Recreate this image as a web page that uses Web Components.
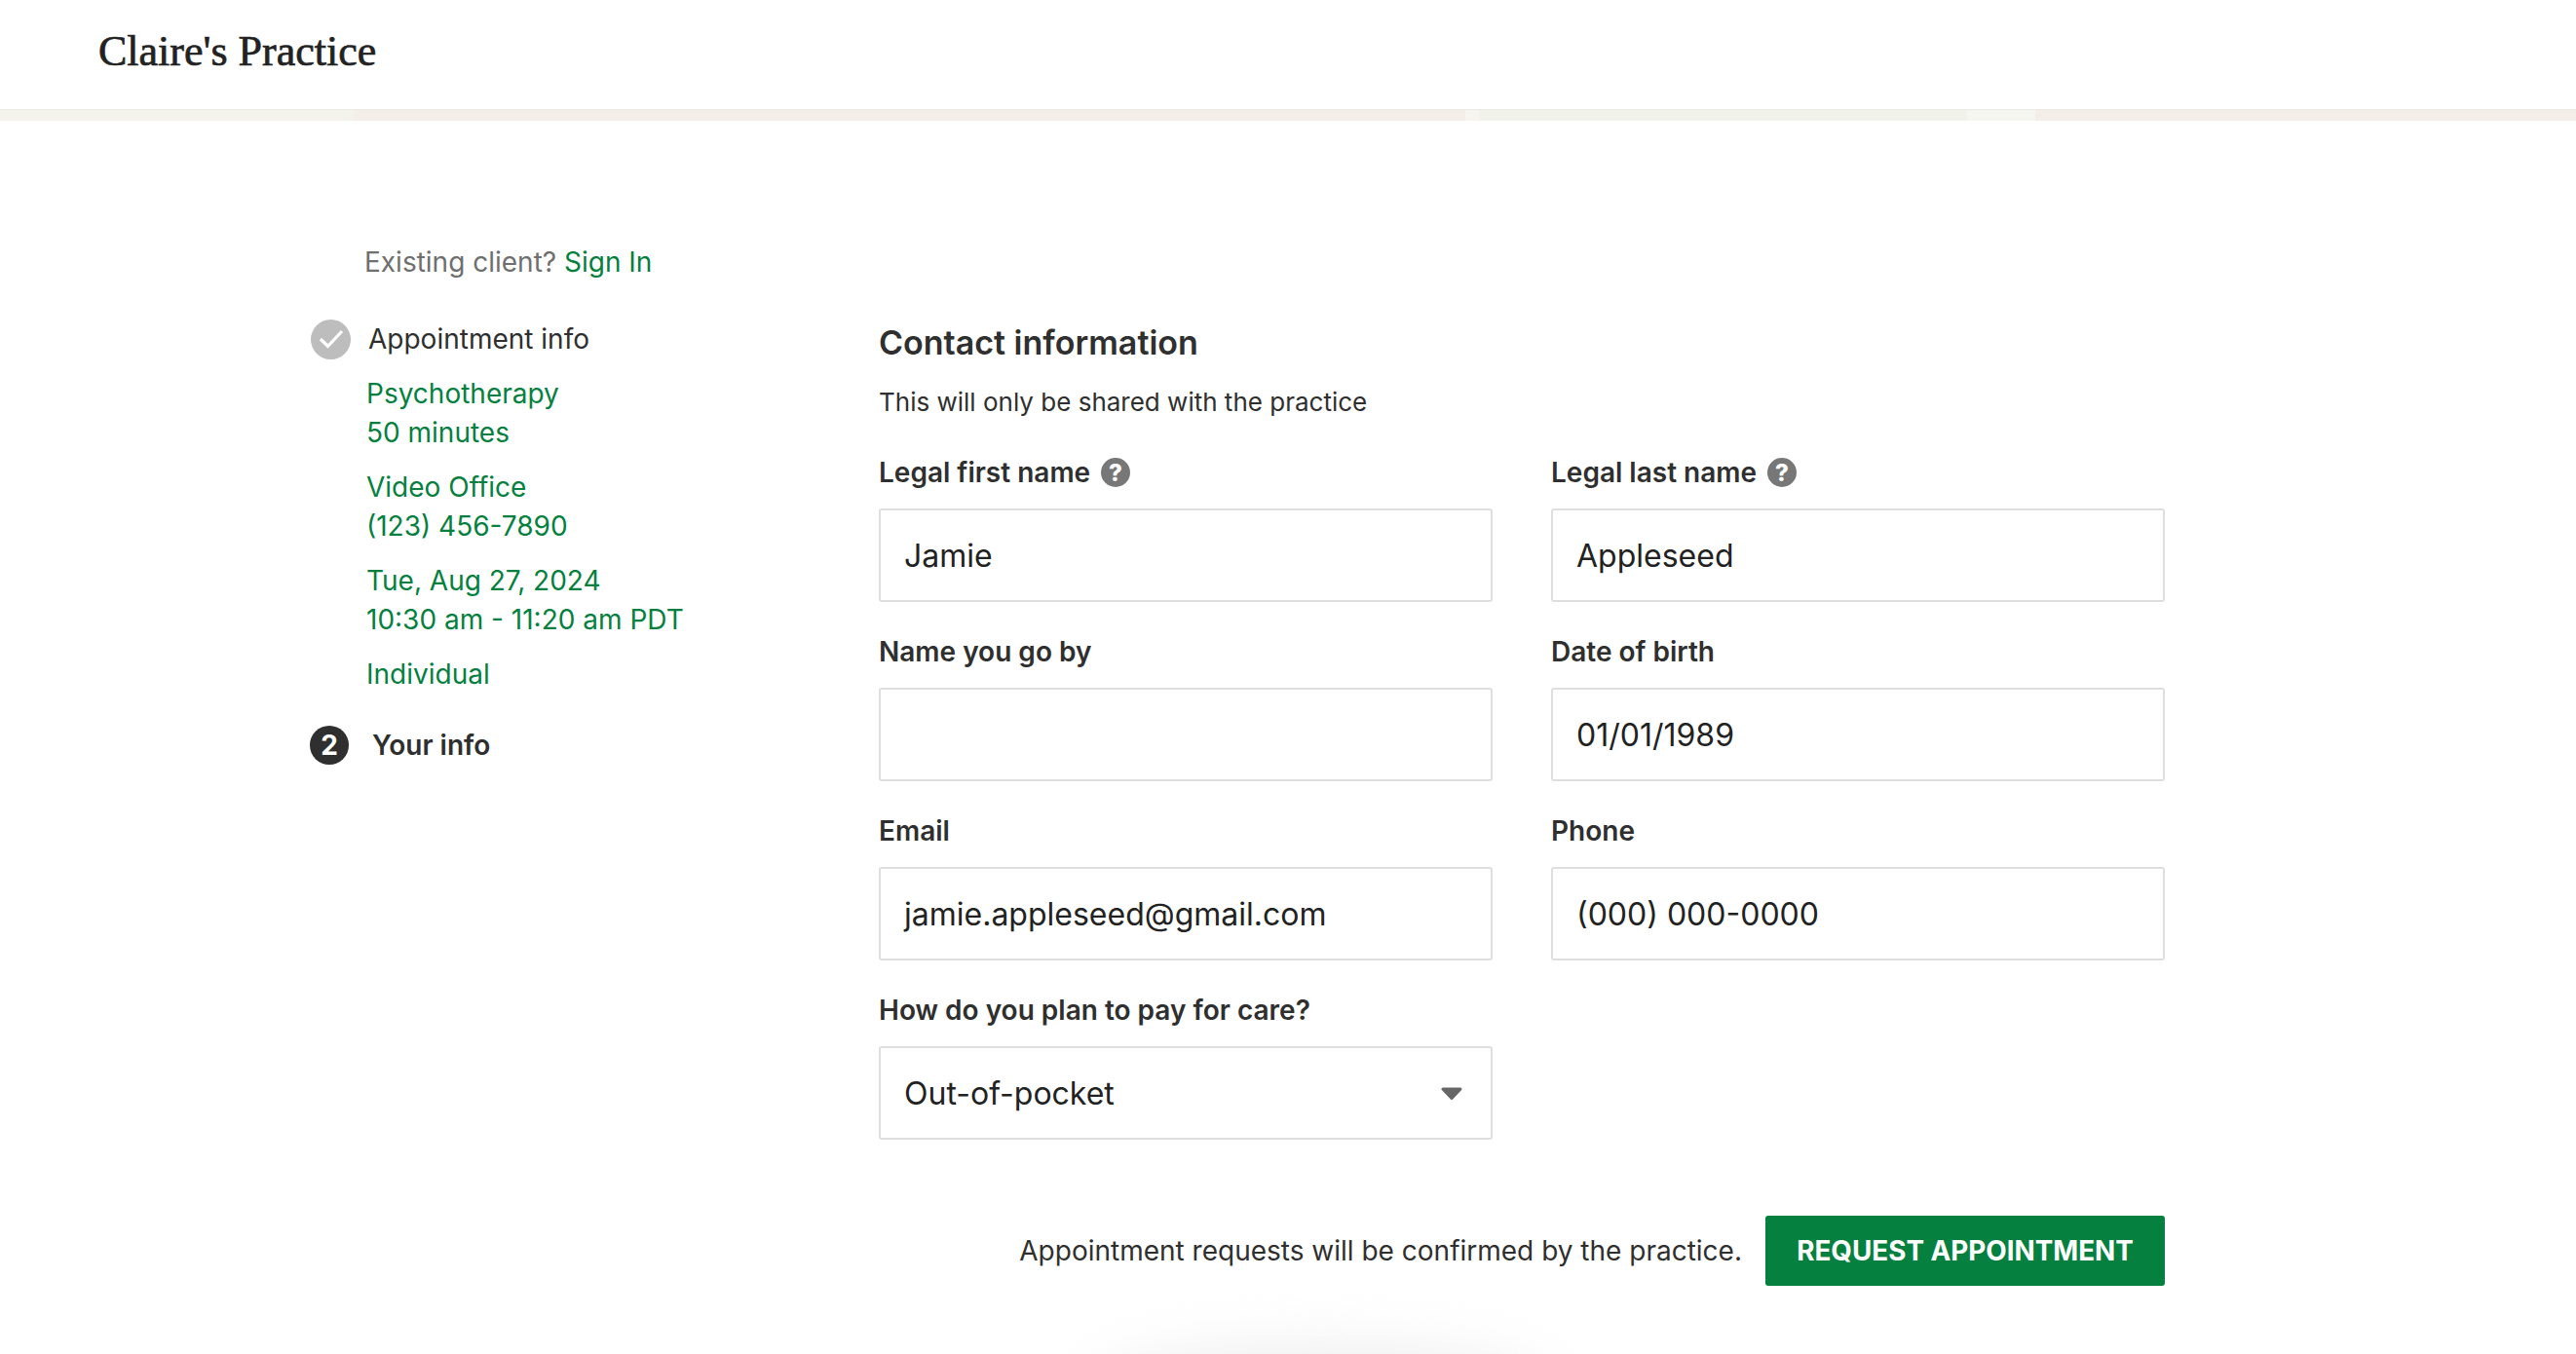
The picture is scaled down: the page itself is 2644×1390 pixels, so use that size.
<!DOCTYPE html>
<html>
<head>
<meta charset="utf-8">
<title>Claire's Practice</title>
<style>
    html, body { margin: 0; padding: 0; background: #fff; }
    body { font-family: Inter, "Liberation Sans", sans-serif; color: #2f2f2f; height: 1390px; overflow: hidden; }
</style>
</head>
<body>
<practice-header>Claire's Practice</practice-header>
<booking-page>
    <booking-steps slot="side"></booking-steps>
    <contact-form slot="main"></contact-form>
</booking-page>

<script>
class PracticeHeader extends HTMLElement {
    constructor() {
        super();
        this.attachShadow({ mode: 'open' });
        this.shadowRoot.innerHTML = `
        <style>
            :host { display: block; }
            .header__title {
                height: 112px;
                box-sizing: border-box;
                padding: 29px 0 0 101px;
                font-family: "Liberation Serif", serif;
                font-size: 44px;
                line-height: 48px;
                color: #222;
                -webkit-text-stroke: 0.7px #222;
            }
            .header__band {
                display: flex;
                height: 12px;
                border-top: 1px solid #e9e9e6;
                box-sizing: border-box;
            }
            .header__band div { height: 100%; }
        </style>
        <div class="header__title"><slot></slot></div>
        <div class="header__band">
            <div style="width: 363px; background: #f3f3ec"></div>
            <div style="width: 1141px; background: #f3efe8"></div>
            <div style="width: 14px; background: #f6f5ef"></div>
            <div style="width: 501px; background: #f1f2e9"></div>
            <div style="width: 70px; background: #f6f6f1"></div>
            <div style="flex: 1; background: #f3efe8"></div>
        </div>
        `;
    }
}

class BookingPage extends HTMLElement {
    constructor() {
        super();
        this.attachShadow({ mode: 'open' });
        this.shadowRoot.innerHTML = `
        <style>
            :host { display: flex; position: relative; height: 1266px; overflow: hidden; padding-left: 317px; }
            .page__side { width: 585px; padding-top: 125px; }
            .page__main { width: 1320px; padding-top: 204px; }
            .page__glow {
                position: absolute;
                left: 1120px;
                top: 1262px;
                width: 470px;
                height: 100px;
                border-radius: 50%;
                background: #ececec;
                filter: blur(30px);
            }
        </style>
        <div class="page__side"><slot name="side"></slot></div>
        <div class="page__main"><slot name="main"></slot></div>
        <div class="page__glow"></div>
        `;
    }
}

class BookingSteps extends HTMLElement {
    constructor() {
        super();
        this.attachShadow({ mode: 'open' });
        this.shadowRoot.innerHTML = `
        <style>
            :host { display: block; font-size: 28px; line-height: 40px; }
            a { color: #05803f; text-decoration: none; }
            .steps__signin { color: #6f6f6f; padding-left: 57px; margin-bottom: 39px; }
            .steps__row { display: flex; align-items: center; height: 40px; }
            .steps__done {
                width: 41px;
                height: 41px;
                margin: 0 18px 0 2px;
                border-radius: 50%;
                background: #bdbdbd;
                display: flex;
                align-items: center;
                justify-content: center;
            }
            .steps__current {
                width: 40px;
                height: 40px;
                margin: 0 24px 0 1px;
                border-radius: 50%;
                background: #2f2f2f;
                color: #fff;
                font-weight: 700;
                font-size: 28px;
                text-align: center;
            }
            .steps__details { margin: 16px 0 0 59px; color: #05803f; }
            .steps__details div { margin-bottom: 16px; }
            .steps__your { font-weight: 600; margin-top: 33px; }
        </style>
        <div class="steps__signin">Existing client? <a href="#">Sign In</a></div>
        <div class="steps__row">
            <div class="steps__done">
                <svg width="26" height="20" viewBox="0 0 26 20"><path d="M2 10l7.5 7.5L24 2" fill="none" stroke="#fff" stroke-width="3.2"/></svg>
            </div>
            <span>Appointment info</span>
        </div>
        <div class="steps__details">
            <div>Psychotherapy<br>50 minutes</div>
            <div>Video Office<br>(123) 456-7890</div>
            <div>Tue, Aug 27, 2024<br>10:30 am - 11:20 am PDT</div>
            <div>Individual</div>
        </div>
        <div class="steps__row steps__your">
            <div class="steps__current">2</div>
            <span>Your info</span>
        </div>
        `;
    }
}

class FormField extends HTMLElement {
    constructor() {
        super();
        this.attachShadow({ mode: 'open' });
    }

    connectedCallback() {
        const help = this.hasAttribute('help') ? `
            <svg class="field__help" width="30" height="30" viewBox="0 0 30 30">
                <circle cx="15" cy="15" r="15" fill="#777"/>
                <text x="15" y="24" text-anchor="middle" font-family="Inter, sans-serif" font-size="24" font-weight="800" fill="#fff">?</text>
            </svg>` : '';
        const arrow = this.hasAttribute('select') ? `
            <svg width="22" height="13" viewBox="0 0 22 13"><path d="M2 2h18l-9 9.5z" fill="#666" stroke="#666" stroke-linejoin="round" stroke-width="3"/></svg>` : '';
        this.shadowRoot.innerHTML = `
        <style>
            :host { display: block; }
            .field__label {
                display: flex;
                align-items: center;
                gap: 11px;
                height: 40px;
                margin-bottom: 17px;
                font-size: 28px;
                font-weight: 600;
                color: #2f2f2f;
            }
            .field__box {
                display: flex;
                align-items: center;
                justify-content: space-between;
                height: 96px;
                box-sizing: border-box;
                padding: 0 29px 0 24px;
                border: 2px solid #dedede;
                border-radius: 3px;
                font-size: 32px;
                color: #222;
            }
        </style>
        <div class="field__label">${this.getAttribute('label')}${help}</div>
        <div class="field__box"><span><slot></slot></span>${arrow}</div>
        `;
    }
}

class ContactForm extends HTMLElement {
    constructor() {
        super();
        this.attachShadow({ mode: 'open' });
        this.shadowRoot.innerHTML = `
        <style>
            :host { display: block; width: 1320px; color: #2f2f2f; }
            h2 { margin: 0; font-size: 34px; line-height: 48px; font-weight: 600; }
            p { margin: 17px 0 32px; font-size: 26px; line-height: 40px; color: #2f2f2f; }
            .form__grid {
                display: grid;
                grid-template-columns: 630px 630px;
                column-gap: 60px;
                row-gap: 31px;
            }
            .form__foot {
                display: flex;
                align-items: center;
                justify-content: flex-end;
                gap: 24px;
                width: 1320px;
                margin-top: 78px;
                font-size: 28px;
            }
            button {
                width: 410px;
                height: 72px;
                border: none;
                border-radius: 3px;
                background: #05803f;
                color: #fff;
                font-family: inherit;
                font-size: 27.8px;
                font-weight: 700;
            }
        </style>
        <h2>Contact information</h2>
        <p>This will only be shared with the practice</p>
        <div class="form__grid">
            <form-field label="Legal first name" help>Jamie</form-field>
            <form-field label="Legal last name" help>Appleseed</form-field>
            <form-field label="Name you go by"></form-field>
            <form-field label="Date of birth">01/01/1989</form-field>
            <form-field label="Email">jamie.appleseed@gmail.com</form-field>
            <form-field label="Phone">(000) 000-0000</form-field>
            <form-field label="How do you plan to pay for care?" select>Out-of-pocket</form-field>
        </div>
        <div class="form__foot">
            <span>Appointment requests will be confirmed by the practice.</span>
            <button>REQUEST APPOINTMENT</button>
        </div>
        `;
    }
}

customElements.define("practice-header", PracticeHeader);
customElements.define("booking-page", BookingPage);
customElements.define("booking-steps", BookingSteps);
customElements.define("form-field", FormField);
customElements.define("contact-form", ContactForm);
</script>
</body>
</html>
